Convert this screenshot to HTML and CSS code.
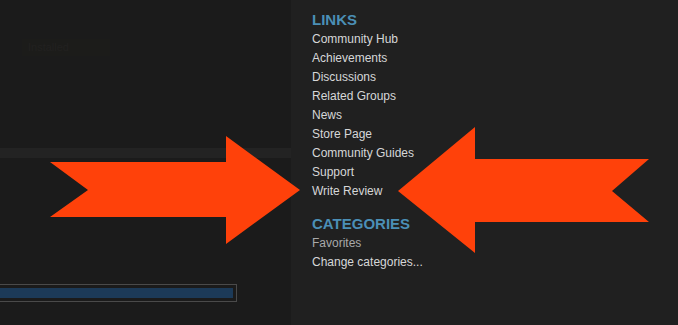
FILE: index.html
```html
<!DOCTYPE html>
<html>
<head>
<meta charset="utf-8">
<link rel="stylesheet" href="styles.css">
</head>
<body>
<div class="page">
  <div class="main">
    <div class="panel top">
      <div class="ghost">Installed</div>
    </div>
    <div class="band"></div>
    <div class="panel bottom">
      <div class="progress"><div class="fill"></div></div>
    </div>
  </div>
  <aside class="sidebar">
    <h2 class="heading">LINKS</h2>
    <ul class="links">
      <li>Community Hub</li>
      <li>Achievements</li>
      <li>Discussions</li>
      <li>Related Groups</li>
      <li>News</li>
      <li>Store Page</li>
      <li>Community Guides</li>
      <li>Support</li>
      <li>Write Review</li>
    </ul>
    <h2 class="heading cat">CATEGORIES</h2>
    <ul class="links">
      <li class="dim">Favorites</li>
      <li>Change categories...</li>
    </ul>
  </aside>
  <svg class="arrows" width="678" height="325" viewBox="0 0 678 325">
    <polygon fill="#ff410a" points="50,162 226,162 226,136 300,190 226,244 226,217 50,217 88,190"/>
    <polygon fill="#ff410a" points="649,159 475,159 475,127 398,191 475,253 475,222 649,222 612,191"/>
  </svg>
</div>
</body>
</html>
```
FILE: styles.css
```css
html, body { margin: 0; padding: 0; }
body {
  background: #202020;
  font-family: "Liberation Sans", Arial, sans-serif;
  width: 678px;
  height: 325px;
  overflow: hidden;
}
.page {
  position: relative;
  display: flex;
  width: 678px;
  height: 325px;
}
.main {
  width: 291px;
  display: flex;
  flex-direction: column;
}
.panel { background: #1b1b1b; }
.top { height: 148px; position: relative; }
.ghost {
  margin: 39px 0 0 22px;
  width: 82px;
  height: 17px;
  background: #1c1c1a;
  color: #222120;
  font-size: 11px;
  line-height: 17px;
  padding-left: 6px;
}
.band { height: 10px; background: #232323; }
.bottom {
  flex: 1;
  padding-top: 126px;
}
.progress {
  width: 233px;
  height: 10px;
  border: 1px solid #4a4a4a;
  border-left: none;
  padding: 3px 3px 3px 0;
}
.fill { height: 100%; background: #1c3a58; }
.sidebar {
  flex: 1;
  padding: 11px 0 0 21px;
  background: #202020;
}
.heading {
  margin: 0;
  font-size: 15px;
  font-weight: bold;
  line-height: 17px;
  color: #4b8fb6;
}
.links {
  list-style: none;
  margin: 0;
  padding: 2px 0 0;
}
.links li {
  font-size: 12px;
  line-height: 19px;
  color: #d6d7d8;
}
.links li.dim { color: #a8a9aa; }
.cat { margin-top: 14px; }
.arrows {
  position: absolute;
  left: 0;
  top: 0;
  pointer-events: none;
}
```
